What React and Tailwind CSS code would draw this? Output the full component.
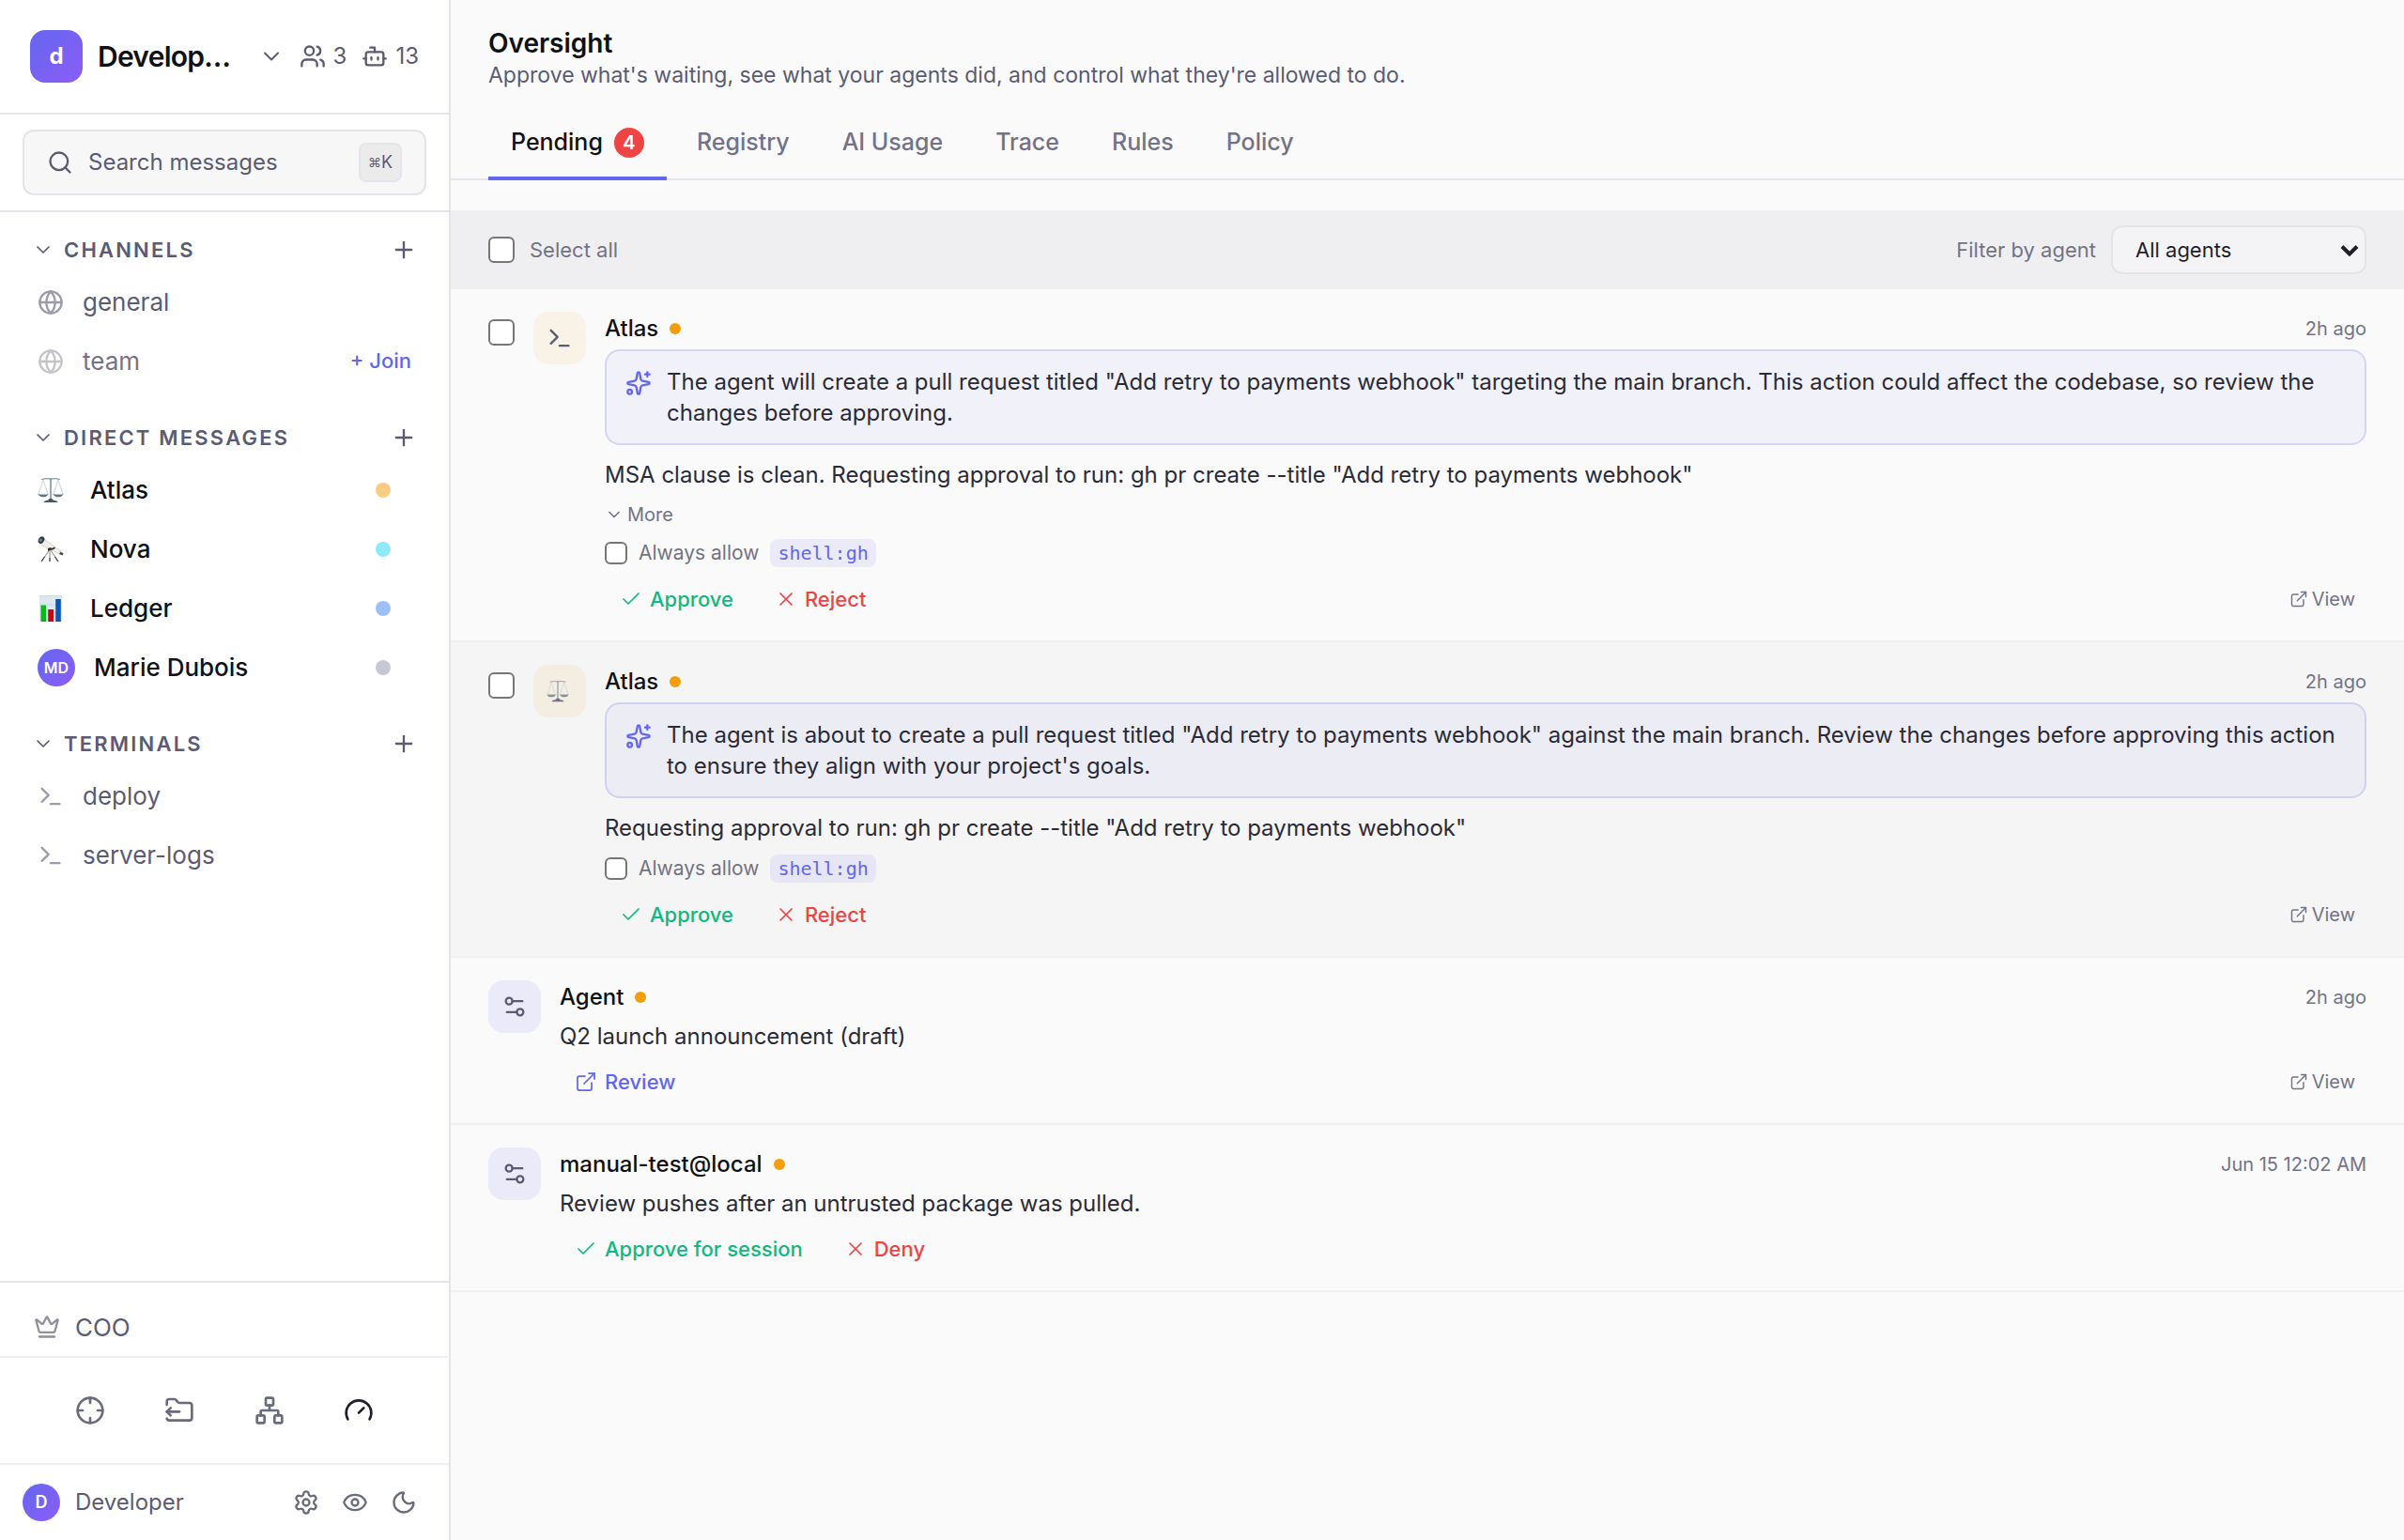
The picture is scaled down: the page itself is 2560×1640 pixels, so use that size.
import React, { useState } from "react";
import {
  Bot,
  Check,
  ChevronDown,
  Crosshair,
  Crown,
  ExternalLink,
  Eye,
  FolderOutput,
  Gauge,
  Globe,
  Moon,
  Network,
  Plus,
  Search,
  Settings,
  Settings2,
  Sparkles,
  Terminal,
  Users,
  X,
} from "lucide-react";

const ScalesIcon = ({ className }) => (
  <svg viewBox="0 0 28 28" fill="none" className={className} aria-hidden="true">
    <path d="M4.500 2.500Q9 1 14 2.200 19 1 23.500 2.500" stroke="#8796a3" strokeWidth="1.200" strokeLinecap="round" />
    <path d="M14 1v23" stroke="#8092a3" strokeWidth="1.600" />
    <path d="M6 3 1 18M6 3l5 15M22 3l-5 15M22 3l5 15" stroke="#c4ccd3" strokeWidth="0.800" />
    <path d="M0.500 18h11c-.8 2.600-3 3.300-5.500 3.300S1.300 20.600.5 18Z" fill="#5f7385" />
    <path d="M16.500 18h11c-.8 2.600-3 3.300-5.500 3.300s-4.700-.7-5.500-3.300Z" fill="#5f7385" />
    <path d="M1.500 18.400h9M17.500 18.400h9" stroke="#b8cbd8" strokeWidth="1" />
    <path d="M6.500 27c0-1.400 2.200-1.800 4.500-2.200L12.500 23h3l1.500 1.800c2.300.4 4.500.8 4.500 2.200Z" fill="#46586a" />
  </svg>
);

const TelescopeIcon = ({ className }) => (
  <svg viewBox="0 0 28 28" fill="none" className={className} aria-hidden="true">
    <path d="m12.500 15-8.500 12M14 15l8 12M13 15v12" stroke="#a39c98" strokeWidth="1.200" />
    <path d="m7.500 22-3.500 5M18.500 22 22 27M13 23v4" stroke="#4b4745" strokeWidth="1.200" />
    <path d="M6 2.500 25 16l-1.500 3L3 8.500Z" fill="#f4efeb" stroke="#cfc5be" strokeWidth="0.800" />
    <path d="m24.500 16.500 3 2-1 2-3.500-1.500Z" fill="#4b4745" />
    <path d="m11 13 3-1 1 1 3-1.500 1 1.500-3 1.500-3.500.5-1.500 1Z" fill="#2f2d2d" />
    <ellipse cx="4" cy="4.200" rx="3" ry="4" transform="rotate(32 4 4.200)" fill="#363b42" />
    <circle cx="3.400" cy="4.300" r="1.600" fill="#5d8aa0" />
  </svg>
);

const BarChartIcon = ({ className }) => (
  <svg viewBox="0 0 28 28" className={className} aria-hidden="true">
    <rect x="2" width="24" height="28" fill="#dde7ef" />
    <path d="M2 .5h24M2 10h24M2 19h24" stroke="#cdd9e2" strokeWidth="0.800" />
    <rect x="3.500" y="10.500" width="5.500" height="17.500" fill="#0bb81a" />
    <rect x="11.200" y="15" width="5.800" height="13" fill="#c00a12" />
    <rect x="19.200" y="4" width="5.600" height="24" fill="#0b57b8" />
  </svg>
);

const DIRECT_MESSAGES = [
  { name: "Atlas", icon: ScalesIcon, dot: "bg-[#f9cc84]" },
  { name: "Nova", icon: TelescopeIcon, dot: "bg-[#8feaf8]" },
  { name: "Ledger", icon: BarChartIcon, dot: "bg-[#9dc0fa]" },
  { name: "Marie Dubois", initials: "MD", dot: "bg-[#c7c7d3]" },
];

const TABS = ["Pending", "Registry", "AI Usage", "Trace", "Rules", "Policy"];

const REQUESTS = [
  {
    id: 1,
    name: "Atlas",
    time: "2h ago",
    icon: Terminal,
    selectable: true,
    hint: 'The agent will create a pull request titled "Add retry to payments webhook" targeting the main branch. This action could affect the codebase, so review the changes before approving.',
    text: 'MSA clause is clean. Requesting approval to run: gh pr create --title "Add retry to payments webhook"',
    more: true,
    rule: "shell:gh",
    approve: "Approve",
    reject: "Reject",
    view: true,
  },
  {
    id: 2,
    name: "Atlas",
    time: "2h ago",
    icon: ScalesIcon,
    selectable: true,
    hovered: true,
    hint: 'The agent is about to create a pull request titled "Add retry to payments webhook" against the main branch. Review the changes before approving this action to ensure they align with your project\'s goals.',
    text: 'Requesting approval to run: gh pr create --title "Add retry to payments webhook"',
    rule: "shell:gh",
    approve: "Approve",
    reject: "Reject",
    view: true,
  },
  {
    id: 3,
    name: "Agent",
    time: "2h ago",
    icon: Settings2,
    text: "Q2 launch announcement (draft)",
    review: true,
    view: true,
  },
  {
    id: 4,
    name: "manual-test@local",
    time: "Jun 15 12:02 AM",
    icon: Settings2,
    text: "Review pushes after an untrusted package was pulled.",
    approve: "Approve for session",
    reject: "Deny",
  },
];

const Checkbox = ({ className, ...props }) => (
  <input
    type="checkbox"
    className={`shrink-0 appearance-none border-2 border-[#767676] bg-white checked:bg-[#6366f1] ${className}`}
    {...props}
  />
);

const Section = ({ title, children }) => (
  <section>
    <div className="flex h-12 items-center px-[34px]">
      <button className="flex items-center gap-[10px] text-[#5b5b73]">
        <ChevronDown size={24} strokeWidth={1.75} />
        <span className="text-[22px] font-semibold tracking-widest uppercase">{title}</span>
      </button>
      <button className="ml-auto text-[#5b5b73]" aria-label={`Add to ${title}`}>
        <Plus size={28} />
      </button>
    </div>
    <ul>{children}</ul>
  </section>
);

const rowClass = "flex h-[63px] items-center gap-5 px-10 text-[26px]";

const Sidebar = () => (
  <aside className="flex w-[480px] shrink-0 flex-col border-r-2 border-[#e4e4ea] bg-white text-[#5b5b73]">
    <div className="flex h-[122px] items-center border-b-2 border-[#e4e4ea] px-8">
      <div className="flex size-14 shrink-0 items-center justify-center rounded-2xl bg-linear-to-br from-[#6366f1] to-[#8b5cf6] text-2xl font-bold text-white">
        d
      </div>
      <button className="ml-4 flex flex-1 items-center justify-between">
        <span className="text-[30px] font-semibold tracking-tight text-[#111114]">Develop…</span>
        <ChevronDown size={28} strokeWidth={1.75} />
      </button>
      <div className="ml-4 flex items-center gap-4 text-2xl">
        <span className="flex items-center gap-2">
          <Users size={28} />3
        </span>
        <span className="flex items-center gap-2">
          <Bot size={28} />
          13
        </span>
      </div>
    </div>

    <div className="flex h-[104px] items-center border-b-2 border-[#e4e4ea] px-6">
      <button className="flex h-[70px] w-full items-center rounded-xl border-2 border-[#e4e4ea] bg-[#f7f7f7] px-6">
        <Search size={28} />
        <span className="ml-4 text-2xl">Search messages</span>
        <kbd className="ml-auto flex h-[42px] items-center rounded-lg border-2 border-[#e4e4ea] bg-[#ebebeb] px-2 font-[Inter,'DejaVu_Sans',sans-serif] text-lg">
          <span className="text-sm">⌘</span>K
        </kbd>
      </button>
    </div>

    <nav className="flex flex-1 flex-col gap-[26px] pt-4">
      <Section title="Channels">
        <li className={rowClass}>
          <Globe size={28} className="text-[#9c9caa]" />
          <a href="#general">general</a>
        </li>
        <li className={rowClass}>
          <Globe size={28} className="text-[#c4c4cc]" />
          <a href="#team" className="text-[#737385]">
            team
          </a>
          <button className="ml-auto text-[22px] font-medium text-[#6366f1]">+ Join</button>
        </li>
      </Section>

      <Section title="Direct messages">
        {DIRECT_MESSAGES.map(({ name, icon: Icon, initials, dot }) => (
          <li key={name} className={rowClass}>
            {Icon ? (
              <span className="w-9">
                <Icon className="size-7" />
              </span>
            ) : (
              <span className="flex size-10 items-center justify-center rounded-full bg-linear-to-br from-[#6366f1] to-[#8b5cf6] text-base font-semibold text-white">
                {initials}
              </span>
            )}
            <a href={`#${name}`} className="font-medium text-[#111114]">
              {name}
            </a>
            <span className={`mr-[22px] ml-auto size-4 rounded-full ${dot}`} />
          </li>
        ))}
      </Section>

      <Section title="Terminals">
        {["deploy", "server-logs"].map((name) => (
          <li key={name} className={rowClass}>
            <Terminal size={28} className="text-[#9c9caa]" />
            <a href={`#${name}`}>{name}</a>
          </li>
        ))}
      </Section>
    </nav>

    <div className="border-t-2 border-[#e4e4ea] pt-4">
      <a href="#coo" className="flex h-[62px] items-center gap-4 px-9 text-[26px]">
        <Crown size={28} className="text-[#9090a0]" />
        COO
      </a>
    </div>
    <div className="grid h-[114px] grid-cols-4 place-items-center border-t-2 border-[#f0f0f2] px-12 text-[#6b6b7e]">
      <button aria-label="Missions">
        <Crosshair size={32} />
      </button>
      <button aria-label="Files">
        <FolderOutput size={32} />
      </button>
      <button aria-label="Organization">
        <Network size={32} />
      </button>
      <button aria-label="Oversight" className="text-[#1f1f2b]">
        <Gauge size={32} />
      </button>
    </div>
    <div className="flex h-[82px] items-center border-t-2 border-[#f0f0f2] pr-[34px] pl-6">
      <span className="flex size-10 items-center justify-center rounded-full bg-linear-to-br from-[#6366f1] to-[#8b5cf6] text-lg font-semibold text-white">
        D
      </span>
      <span className="ml-4 text-2xl">Developer</span>
      <div className="ml-auto flex gap-6 text-[#6b6b7e]">
        <button aria-label="Settings">
          <Settings size={28} />
        </button>
        <button aria-label="Visibility">
          <Eye size={28} />
        </button>
        <button aria-label="Dark mode">
          <Moon size={28} />
        </button>
      </div>
    </div>
  </aside>
);

const RequestItem = ({ item, checked, onCheck }) => {
  const Icon = item.icon;

  return (
    <li className={`flex gap-5 border-b-2 border-[#f0f0f2] px-10 py-6 ${item.hovered ? "bg-[#f5f5f5]" : ""}`}>
      {item.selectable && (
        <Checkbox
          className="mt-2 size-7 rounded-md"
          aria-label={`Select request from ${item.name}`}
          checked={checked}
          onChange={onCheck}
        />
      )}
      <div
        className={`flex size-14 shrink-0 items-center justify-center rounded-2xl text-[#5b5b73] ${
          item.selectable ? "bg-[#f59e0b]/8" : "bg-[#6366f1]/10"
        }`}
      >
        {item.icon === ScalesIcon ? <Icon className="mr-1 size-6 opacity-80" /> : <Icon size={28} />}
      </div>
      <div className="min-w-0 flex-1">
        <div className="mb-1 flex h-9 items-center">
          <h2 className="text-2xl font-medium text-[#111114]">{item.name}</h2>
          <span className="ml-3 size-3 rounded-full bg-[#f59e0b]" />
          <time className="ml-auto text-xl text-[#737387]">{item.time}</time>
        </div>
        {item.hint && (
          <div className="mb-3 flex gap-4 rounded-2xl border-2 border-[#6366f1]/20 bg-[#6366f1]/6 px-5 py-4 text-2xl/[33px] text-[#2b2b38]">
            <Sparkles size={28} className="mt-1 shrink-0 text-[#6366f1]" />
            <p>{item.hint}</p>
          </div>
        )}
        <p className="text-2xl/10 text-[#2b2b38]">{item.text}</p>
        {item.more && (
          <button className="mt-[6px] mb-[10px] flex h-8 items-center gap-1 text-xl text-[#737387]">
            <ChevronDown size={20} />
            More
          </button>
        )}
        {item.rule && (
          <label className="mt-2 mb-[14px] flex h-[30px] w-fit items-center gap-3 text-[21px] text-[#737387]">
            <Checkbox className="size-6 rounded-md" />
            Always allow
            <code className="rounded-lg bg-[#6366f1]/10 px-2 font-['DejaVu_Sans_Mono',monospace] text-xl/[30px] text-[#6366f1]">
              {item.rule}
            </code>
          </label>
        )}
        <div className={`flex h-10 items-center gap-3 text-[22px] font-medium ${item.rule ? "" : "mt-2"}`}>
          {item.approve && (
            <button className="flex items-center gap-2 px-4 text-[#10b981]">
              <Check size={24} strokeWidth={1.75} />
              {item.approve}
            </button>
          )}
          {item.reject && (
            <button className="flex items-center gap-2 px-4 text-[#ef4444]">
              <X size={24} strokeWidth={1.75} />
              {item.reject}
            </button>
          )}
          {item.review && (
            <button className="flex items-center gap-2 px-4 text-[#6366f1]">
              <ExternalLink size={24} strokeWidth={1.75} />
              Review
            </button>
          )}
          {item.view && (
            <a href="#view" className="ml-auto flex items-center gap-1 px-3 text-xl font-normal text-[#737387]">
              <ExternalLink size={20} strokeWidth={1.75} />
              View
            </a>
          )}
        </div>
      </div>
    </li>
  );
};

const App = () => {
  const [activeTab, setActiveTab] = useState("Pending");
  const [selected, setSelected] = useState([]);

  const selectableIds = REQUESTS.filter((r) => r.selectable).map((r) => r.id);

  const toggle = (id) => {
    setSelected((prev) => (prev.includes(id) ? prev.filter((x) => x !== id) : [...prev, id]));
  };

  return (
    <div className="flex min-h-screen bg-[#fafafa] font-[Inter,sans-serif]">
      <Sidebar />
      <main className="min-w-0 flex-1">
        <header className="border-b-2 border-[#e4e4ea] px-10 pt-7">
          <h1 className="text-[28px]/9 font-semibold text-[#111114]">Oversight</h1>
          <p className="text-[23px]/8 text-[#5b5b73]">
            Approve what's waiting, see what your agents did, and control what they're allowed to do.
          </p>
          <div className="mt-5 -mb-[2px] flex gap-2" role="tablist">
            {TABS.map((tab) => (
              <button
                key={tab}
                role="tab"
                aria-selected={tab === activeTab}
                onClick={() => setActiveTab(tab)}
                className={`flex h-[76px] items-center gap-3 border-b-4 px-6 text-[25px] font-medium ${
                  tab === activeTab ? "border-[#6366f1] text-[#111114]" : "border-transparent text-[#737387]"
                }`}
              >
                {tab}
                {tab === "Pending" && (
                  <span className="flex size-8 items-center justify-center rounded-full bg-[#ef4444] text-xl font-semibold text-white">
                    4
                  </span>
                )}
              </button>
            ))}
          </div>
        </header>

        <div className="mt-8 flex h-[84px] items-center bg-[#efeff1] px-10 text-[22px] text-[#737387]">
          <label className="flex items-center gap-4">
            <Checkbox
              className="size-7 rounded-md"
              checked={selected.length === selectableIds.length}
              onChange={(e) => setSelected(e.target.checked ? selectableIds : [])}
            />
            Select all
          </label>
          <label htmlFor="agent-filter" className="mr-4 ml-auto">
            Filter by agent
          </label>
          <div className="relative">
            <select
              id="agent-filter"
              className="h-[52px] w-[272px] appearance-none rounded-xl border-2 border-[#e4e4e8] bg-[#f4f4f6] px-6 text-[22px] text-[#1f1f2b]"
            >
              <option>All agents</option>
              <option>Atlas</option>
              <option>Nova</option>
              <option>Ledger</option>
            </select>
            <svg
              viewBox="0 0 20 14"
              fill="none"
              className="pointer-events-none absolute top-5 right-2 h-[14px] w-5"
              aria-hidden="true"
            >
              <path d="m2 2.500 8 8 8-8" stroke="#1f1f2b" strokeWidth="4" />
            </svg>
          </div>
        </div>

        <ul>
          {REQUESTS.map((item) => (
            <RequestItem
              key={item.id}
              item={item}
              checked={selected.includes(item.id)}
              onCheck={() => toggle(item.id)}
            />
          ))}
        </ul>
      </main>
    </div>
  );
};

export default App;
